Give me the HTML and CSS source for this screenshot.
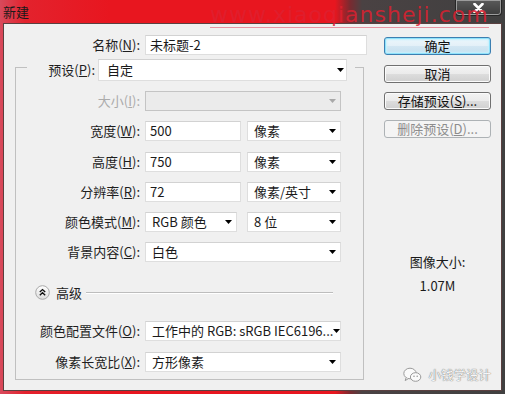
FILE: index.html
```html
<!DOCTYPE html>
<html lang="zh-CN">
<head>
<meta charset="utf-8">
<title>新建</title>
<link rel="stylesheet" href="styles.css">
</head>
<body>
<div class="window">
  <div class="titlebar">
    <span class="title">新建</span>
    <span class="close"><svg width="11" height="10" viewBox="0 0 11 10"><path d="M1.5 1 L9.5 9 M9.5 1 L1.5 9" stroke="#fff" stroke-width="2.6" stroke-linecap="round"/></svg></span>
  </div>
  <div class="client">
    <div class="left">
      <div class="name-row">
        <span class="lbl">名称(<u>N</u>):</span>
        <div class="field">未标题-2</div>
      </div>
      <fieldset class="group">
        <legend class="legend">
          <div class="legend-inner">
            <span class="lbl lbl-preset">预设(<u>P</u>):</span>
            <div class="field combo w-preset"><span>自定</span><svg class="arrow" width="7" height="4" viewBox="0 0 7 4"><path d="M0 0H7L3.5 4Z" fill="#000"/></svg></div>
          </div>
        </legend>
        <div class="rows">
          <div class="row">
            <span class="lbl disabled">大小(<u>I</u>):</span>
            <div class="field combo disabled w-full"><span></span><svg class="arrow" width="7" height="4" viewBox="0 0 7 4"><path d="M0 0H7L3.5 4Z" fill="#a8a8a8"/></svg></div>
          </div>
          <div class="row">
            <span class="lbl">宽度(<u>W</u>):</span>
            <div class="pair">
              <div class="field w-num">500</div>
              <div class="field combo w-unit"><span>像素</span><svg class="arrow" width="7" height="4" viewBox="0 0 7 4"><path d="M0 0H7L3.5 4Z" fill="#000"/></svg></div>
            </div>
          </div>
          <div class="row">
            <span class="lbl">高度(<u>H</u>):</span>
            <div class="pair">
              <div class="field w-num">750</div>
              <div class="field combo w-unit"><span>像素</span><svg class="arrow" width="7" height="4" viewBox="0 0 7 4"><path d="M0 0H7L3.5 4Z" fill="#000"/></svg></div>
            </div>
          </div>
          <div class="row">
            <span class="lbl">分辨率(<u>R</u>):</span>
            <div class="pair">
              <div class="field w-num">72</div>
              <div class="field combo w-unit"><span>像素/英寸</span><svg class="arrow" width="7" height="4" viewBox="0 0 7 4"><path d="M0 0H7L3.5 4Z" fill="#000"/></svg></div>
            </div>
          </div>
          <div class="row">
            <span class="lbl">颜色模式(<u>M</u>):</span>
            <div class="pair pair-wide">
              <div class="field combo w-mode"><span>RGB 颜色</span><svg class="arrow" width="7" height="4" viewBox="0 0 7 4"><path d="M0 0H7L3.5 4Z" fill="#000"/></svg></div>
              <div class="field combo w-unit"><span>8 位</span><svg class="arrow" width="7" height="4" viewBox="0 0 7 4"><path d="M0 0H7L3.5 4Z" fill="#000"/></svg></div>
            </div>
          </div>
          <div class="row">
            <span class="lbl">背景内容(<u>C</u>):</span>
            <div class="field combo w-full"><span>白色</span><svg class="arrow" width="7" height="4" viewBox="0 0 7 4"><path d="M0 0H7L3.5 4Z" fill="#000"/></svg></div>
          </div>
        </div>
        <div class="adv">
          <svg class="adv-btn" width="15" height="15" viewBox="0 0 15 15">
            <defs><linearGradient id="g" x1="0" y1="0" x2="0" y2="1"><stop offset="0" stop-color="#ffffff"/><stop offset="1" stop-color="#dcdcdc"/></linearGradient></defs>
            <circle cx="7.5" cy="7.5" r="6.8" fill="url(#g)" stroke="#a9a9a9" stroke-width="1"/>
            <path d="M4.8 7 L7.5 4.6 L10.2 7 M4.8 10.2 L7.5 7.8 L10.2 10.2" fill="none" stroke="#111" stroke-width="1.4"/>
          </svg>
          <span class="adv-text">高级</span>
          <span class="adv-line"></span>
        </div>
        <div class="rows rows2">
          <div class="row">
            <span class="lbl">颜色配置文件(<u>O</u>):</span>
            <div class="field combo w-full"><span>工作中的 RGB: sRGB IEC6196...</span><svg class="arrow" width="7" height="4" viewBox="0 0 7 4"><path d="M0 0H7L3.5 4Z" fill="#000"/></svg></div>
          </div>
          <div class="row">
            <span class="lbl">像素长宽比(<u>X</u>):</span>
            <div class="field combo w-full"><span>方形像素</span><svg class="arrow" width="7" height="4" viewBox="0 0 7 4"><path d="M0 0H7L3.5 4Z" fill="#000"/></svg></div>
          </div>
        </div>
      </fieldset>
    </div>
    <div class="right">
      <button class="btn btn-default">确定</button>
      <button class="btn">取消</button>
      <button class="btn">存储预设(<u>S</u>)...</button>
      <button class="btn btn-disabled">删除预设(<u>D</u>)...</button>
      <div class="imgsize">
        <div>图像大小:</div>
        <div class="imgsize-val">1.07M</div>
      </div>
    </div>
    <div class="wm-bottom">
      <svg width="19" height="16" viewBox="0 0 19 16">
        <ellipse cx="7" cy="6.5" rx="6.2" ry="5.3" fill="#fafafa" stroke="#9a9a9a" stroke-width="1"/>
        <path d="M3 11 L2.2 13.6 L5.4 11.6" fill="#fafafa" stroke="#9a9a9a" stroke-width="1"/>
        <ellipse cx="12.6" cy="10" rx="5.2" ry="4.3" fill="#fafafa" stroke="#9a9a9a" stroke-width="1"/>
        <circle cx="11" cy="9.3" r="0.8" fill="#9a9a9a"/>
        <circle cx="14.2" cy="9.3" r="0.8" fill="#9a9a9a"/>
      </svg>
      <span>小钱学设计</span>
    </div>
  </div>
  <div class="wm-top">www.xiaoqiansheji.com</div>
</div>
</body>
</html>
```

FILE: styles.css
```css
* { box-sizing: border-box; }

html, body {
  margin: 0;
  padding: 0;
}

body {
  font-family: "Noto Sans CJK SC", "Noto Sans", sans-serif;
  font-size: 13px;
  color: #1e1e1e;
}

.window {
  position: relative;
  width: 505px;
  height: 394px;
  display: flex;
  flex-direction: column;
  padding: 0 3px 3px;
  overflow: hidden;
  background: linear-gradient(to right, #d84a5c 0, #e3222d 25px, #e8161f 110px, #e8161f 335px, #7a2a30 350px, #4a4243 362px, #404040 100%);
}

.titlebar {
  height: 23px;
  display: flex;
  align-items: center;
  flex: none;
}

.title {
  font-size: 13px;
  line-height: 16px;
  color: #1a1a1a;
}

.close {
  margin-left: auto;
  align-self: flex-start;
  width: 47px;
  height: 16px;
  display: flex;
  align-items: center;
  justify-content: center;
  border: 1px solid #262626;
  border-top: none;
  border-radius: 0 0 4px 4px;
  background: linear-gradient(#5a5a5a, #3c3c3c);
  box-shadow: inset 0 0 0 1px #9c9c9c;
}

.client {
  position: relative;
  flex: 1;
  display: flex;
  padding-top: 11px;
  background: #f0f0f0;
  border: 1px solid #5a4040;
}

.left {
  width: 376px;
  display: flex;
  flex-direction: column;
}

.right {
  width: 107px;
  margin-left: 4px;
  display: flex;
  flex-direction: column;
  gap: 9.6px;
  padding-top: 2px;
}

.name-row {
  display: grid;
  grid-template-columns: 136px 222px;
  column-gap: 5px;
  align-items: center;
}

.lbl {
  text-align: right;
  white-space: nowrap;
  line-height: 16px;
  color: #1e1e1e;
}

.lbl.disabled { color: #ababab; }

.field {
  height: 20px;
  background: #fff;
  border: 1px solid #dedede;
  border-top-color: #d2d2d2;
  display: flex;
  align-items: center;
  padding: 0 4px;
  line-height: 16px;
  white-space: nowrap;
  overflow: hidden;
  color: #1a1a1a;
}

.combo {
  justify-content: space-between;
  padding: 0 4px 0 6px;
}

.combo .arrow { flex: none; }

.combo.disabled {
  background: #ebebeb;
  border-color: #c4c4c4;
}

.group {
  margin: -2px 0 0 11px;
  width: 349px;
  min-width: 0;
  border: 1px solid #c0c0c0;
  padding: 10px 0 7px 11px;
}

.legend {
  padding: 6px 8px 0 0;
  width: 328px;
}

.legend-inner {
  display: flex;
  align-items: center;
  gap: 3px;
}

.lbl-preset { width: 68px; }

.w-preset {
  width: 249px;
  height: 22px;
  padding: 0 2px 0 8px;
}

.rows {
  display: flex;
  flex-direction: column;
  gap: 10.25px;
}

.row {
  display: grid;
  grid-template-columns: 113px auto;
  column-gap: 5px;
  align-items: center;
}

.pair {
  display: flex;
  gap: 6px;
}

.pair-wide { gap: 10px; }

.w-full { width: 196px; }
.w-num { width: 96px; }
.w-unit { width: 94px; }
.w-mode { width: 92px; }

.adv {
  display: flex;
  align-items: center;
  height: 15px;
  margin: 23px 30px 0 8px;
}

.adv-btn { flex: none; }

.adv-text {
  margin-left: 6px;
  line-height: 16px;
}

.adv-line {
  flex: 1;
  height: 1px;
  margin-left: 4px;
  background: #bdbdbd;
  box-shadow: 0 1px 0 #ffffff;
}

.rows2 { margin-top: 21px; }

.btn {
  width: 107px;
  height: 18px;
  padding: 0;
  font-family: inherit;
  font-size: 13px;
  line-height: 16px;
  color: #111;
  border: 1px solid #707070;
  border-radius: 3px;
  background: linear-gradient(#f3f3f3, #ebebeb 50%, #dddddd 50%, #d0d0d0);
  box-shadow: inset 0 0 0 1px #fbfbfb;
}

.btn-default {
  border-color: #3c7fb1;
  background: linear-gradient(#eef7fc, #e3f0f8 50%, #d3e7f3 50%, #c6dfee);
  box-shadow: inset 0 0 0 1px #8fe2fb, inset 0 0 2px 2px #c6f0fd;
}

.btn-disabled {
  color: #8d8d8d;
  border-color: #adb2b5;
  background: #f4f4f4;
  box-shadow: none;
}

.imgsize {
  margin-top: 107px;
  text-align: center;
  line-height: 16px;
  color: #1a1a1a;
}

.imgsize-val { margin-top: 8px; }

.wm-bottom {
  position: absolute;
  right: 10px;
  bottom: 7px;
  display: flex;
  align-items: center;
  gap: 6px;
  font-size: 12.5px;
  line-height: 16px;
  color: #f6f6f6;
  text-shadow: 0 0 1px #7a7a7a, 0 0 1px #7a7a7a;
}

.wm-top {
  position: absolute;
  left: 210px;
  top: 4px;
  font-family: "DejaVu Sans", sans-serif;
  font-size: 22px;
  line-height: 22px;
  letter-spacing: 1px;
  color: rgba(222, 32, 48, 0.85);
  padding-bottom: 1px;
  border-bottom: 1px solid rgba(226, 96, 116, 0.65);
  white-space: nowrap;
}
```
